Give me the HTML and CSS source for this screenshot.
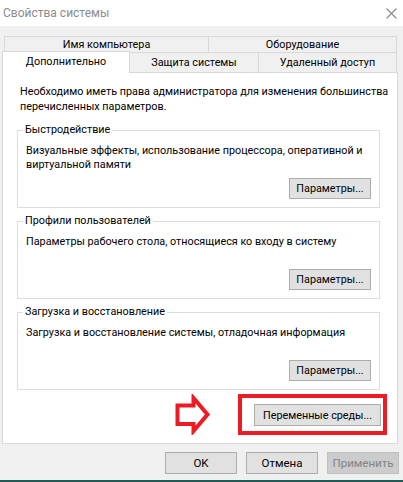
FILE: index.html
```html
<!DOCTYPE html>
<html lang="ru">
<head>
<meta charset="utf-8">
<title>Свойства системы</title>
<link rel="stylesheet" href="styles.css">
</head>
<body>
<div class="window">
  <div class="titlebar">
    <span class="title">Свойства системы</span>
    <svg class="close" width="11" height="11" viewBox="0 0 11 11"><path d="M0.5 0.5 L10.5 10.5 M10.5 0.5 L0.5 10.5" stroke="#8a8a8a" stroke-width="1.1" fill="none"/></svg>
  </div>
  <div class="tabs">
    <div class="tabrow row-top">
      <div class="tab tab-name">Имя компьютера</div>
      <div class="tab tab-hw">Оборудование</div>
    </div>
    <div class="tabrow row-bottom">
      <div class="tab tab-adv active">Дополнительно</div>
      <div class="tab tab-prot">Защита системы</div>
      <div class="tab tab-remote">Удаленный доступ</div>
    </div>
  </div>
  <div class="panel">
    <p class="intro">Необходимо иметь права администратора для изменения большинства<br>перечисленных параметров.</p>
    <fieldset class="group">
      <legend>Быстродействие</legend>
      <p class="desc">Визуальные эффекты, использование процессора, оперативной и<br>виртуальной памяти</p>
      <div class="btnrow"><button class="btn">Параметры...</button></div>
    </fieldset>
    <fieldset class="group">
      <legend>Профили пользователей</legend>
      <p class="desc">Параметры рабочего стола, относящиеся ко входу в систему</p>
      <div class="btnrow"><button class="btn">Параметры...</button></div>
    </fieldset>
    <fieldset class="group">
      <legend>Загрузка и восстановление</legend>
      <p class="desc">Загрузка и восстановление системы, отладочная информация</p>
      <div class="btnrow"><button class="btn">Параметры...</button></div>
    </fieldset>
    <div class="envrow">
      <svg class="arrow" width="36" height="41" viewBox="0 0 36 41"><polygon points="2.5,11.5 18.5,11.5 18.5,4 32.5,20.5 18.5,37 18.5,30 2.5,30" fill="#fff" stroke="#ed1c24" stroke-width="4" stroke-linejoin="miter"/></svg>
      <div class="highlight"><button class="btn btn-env">Переменные среды...</button></div>
    </div>
  </div>
  <div class="footer">
    <button class="btn btn-foot">OK</button>
    <button class="btn btn-foot">Отмена</button>
    <button class="btn btn-foot disabled">Применить</button>
  </div>
  <div class="desktop-edge"></div>
</div>
</body>
</html>
```
FILE: styles.css
```css
html, body {
  margin: 0;
  padding: 0;
  width: 403px;
  height: 482px;
  overflow: hidden;
  background: #f0f0f0;
}
.window {
  display: flex;
  flex-direction: column;
  height: 482px;
  font-family: Roboto, "Liberation Sans", Arial, sans-serif;
  font-size: 10.8px;
  color: #000;
}
.titlebar {
  height: 26px;
  flex: none;
  background: #fff;
  display: flex;
  align-items: center;
  justify-content: space-between;
  padding: 0 6px 0 3px;
}
.title {
  color: #8c8c8c;
  font-size: 12px;
}
.close { display: block; }
.tabs {
  margin-top: 10px;
  padding-left: 2px;
}
.tabrow {
  display: flex;
}
.row-top {
  margin-left: 2px;
  height: 16px;
}
.row-bottom {
  height: 20px;
  align-items: flex-end;
  margin-left: 0;
}
.tab {
  box-sizing: border-box;
  border: 1px solid #d9d9d9;
  border-bottom: none;
  background: #f0f0f0;
  display: flex;
  align-items: center;
  justify-content: center;
  line-height: 14px;
  white-space: nowrap;
}
.row-top .tab { height: 16px; }
.tab + .tab { margin-left: -1px; }
.tab-name { width: 205px; }
.tab-hw { width: 189px; }
.row-bottom .tab { height: 20px; }
.tab-adv {
  width: 128px;
}
.tab-prot { width: 130px; margin-left: -1px; }
.tab-remote { width: 139px; }
.row-bottom .tab.active {
  height: 22px;
  background: #fff;
  margin-bottom: -1px;
  position: relative;
  z-index: 1;
  padding-bottom: 2px;
}
.row-bottom .tab-prot, .row-bottom .tab-remote {
  padding-top: 1px;
}
.panel {
  box-sizing: border-box;
  margin-left: 2px;
  width: 396px;
  height: 372px;
  flex: none;
  background: #fff;
  border: 1px solid #d9d9d9;
  padding: 11px 10px 0 14px;
}
.intro {
  margin: 0 0 0 3px;
  line-height: 15px;
  white-space: nowrap;
}
.group {
  box-sizing: border-box;
  width: 363px;
  margin: 9px 0 0 0;
  padding: 0 8px 8px 8px;
  border: 1px solid #dcdcdc;
  min-width: 0;
}
.group + .group { margin-top: 6px; }
.group legend {
  padding: 0 2px;
  margin-left: -3px;
  line-height: 14px;
}
.desc {
  margin: 7px 0 0 0;
  height: 34px;
  line-height: 14px;
  white-space: nowrap;
}
.btnrow {
  display: flex;
  justify-content: flex-end;
}
.btn {
  box-sizing: border-box;
  height: 21px;
  padding: 0 4px;
  background: #e1e1e1;
  border: 1px solid #adadad;
  font-family: Roboto, "Liberation Sans", Arial, sans-serif;
  font-size: 10.8px;
  color: #000;
  margin: 0;
  white-space: nowrap;
}
.btnrow .btn { width: 82px; }
.envrow {
  display: flex;
  justify-content: flex-end;
  align-items: center;
  margin-top: 4px;
  gap: 27px;
}
.arrow { display: block; margin-top: -1px; }
.highlight {
  border: 4px solid #ed1c24;
  padding: 6px 2px 5px 12px;
  display: flex;
}
.btn-env { width: 127px; height: 22px; }
.footer {
  display: flex;
  justify-content: flex-end;
  gap: 9px;
  padding: 8px 4px 0 0;
}
.btn-foot { width: 72px; height: 22px; font-size: 11.5px; }
.btn.disabled {
  background: #cccccc;
  border-color: #bfbfbf;
  color: #838383;
}
.desktop-edge {
  margin-top: auto;
  height: 2px;
  background: #1f5c58;
}
```
